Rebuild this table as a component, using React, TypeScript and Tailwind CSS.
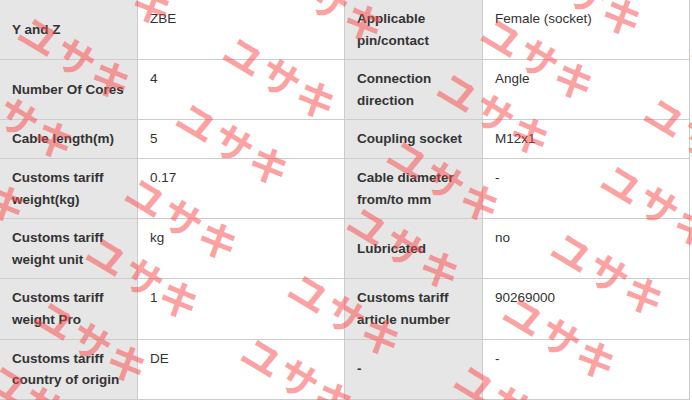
import React from "react";

const rows: [string, string, string, string][] = [
  ["Y and Z", "ZBE", "Applicable pin/contact", "Female (socket)"],
  ["Number Of Cores", "4", "Connection direction", "Angle"],
  ["Cable length(m)", "5", "Coupling socket", "M12x1"],
  ["Customs tariff weight(kg)", "0.17", "Cable diameter from/to mm", "-"],
  ["Customs tariff weight unit", "kg", "Lubricated", "no"],
  ["Customs tariff weight Pro", "1", "Customs tariff article number", "90269000"],
  ["Customs tariff country of origin", "DE", "-", "-"],
];

const marks: [number, number][] = [
  [118, -17], [77, 57], [20, 117], [-28, 181],
  [330, 0], [282, 77], [235, 143], [184, 218], [145, 277], [93, 341], [45, 405],
  [588, -6], [540, 58], [496, 113], [446, 180], [406, 247], [347, 314], [300, 378],
  [751, 74], [703, 138], [660, 205], [610, 273], [562, 337], [513, 405],
];

function Label({ text }: { text: string }) {
  return (
    <div className="bg-[#e6e6e6] flex items-center pl-3 pr-[10px] py-2 font-bold text-[#333]">
      <span>{text}</span>
    </div>
  );
}

function Value({ text }: { text: string }) {
  return <div className="bg-white pl-3 pr-[10px] py-2 text-[#333]">{text}</div>;
}

export default function App() {
  return (
    <div
      className="relative w-[692px] h-[400px] overflow-hidden bg-white text-[13.5px] leading-[21.6px]"
      style={{ fontFamily: '"Liberation Sans", Arial, sans-serif' }}
    >
      <div className="w-[690px] grid grid-cols-[137px_206px_137px_206px] gap-px bg-[#cccccc] border-r border-b border-[#cccccc]">
        {rows.map((r, i) => (
          <React.Fragment key={i}>
            <Label text={r[0]} />
            <Value text={r[1]} />
            <Label text={r[2]} />
            <Value text={r[3]} />
          </React.Fragment>
        ))}
      </div>
      <div className="pointer-events-none absolute inset-0 overflow-hidden">
        {marks.map(([x, y], i) => (
          <span
            key={i}
            className="absolute whitespace-nowrap text-[40px] leading-none font-bold tracking-[2px] text-[rgba(250,70,70,0.5)]"
            style={{
              left: x,
              top: y,
              transform: "translate(-50%, -50%) rotate(31deg)",
              fontFamily: '"Noto Sans CJK JP", sans-serif',
            }}
          >
            ユサキ
          </span>
        ))}
      </div>
    </div>
  );
}
